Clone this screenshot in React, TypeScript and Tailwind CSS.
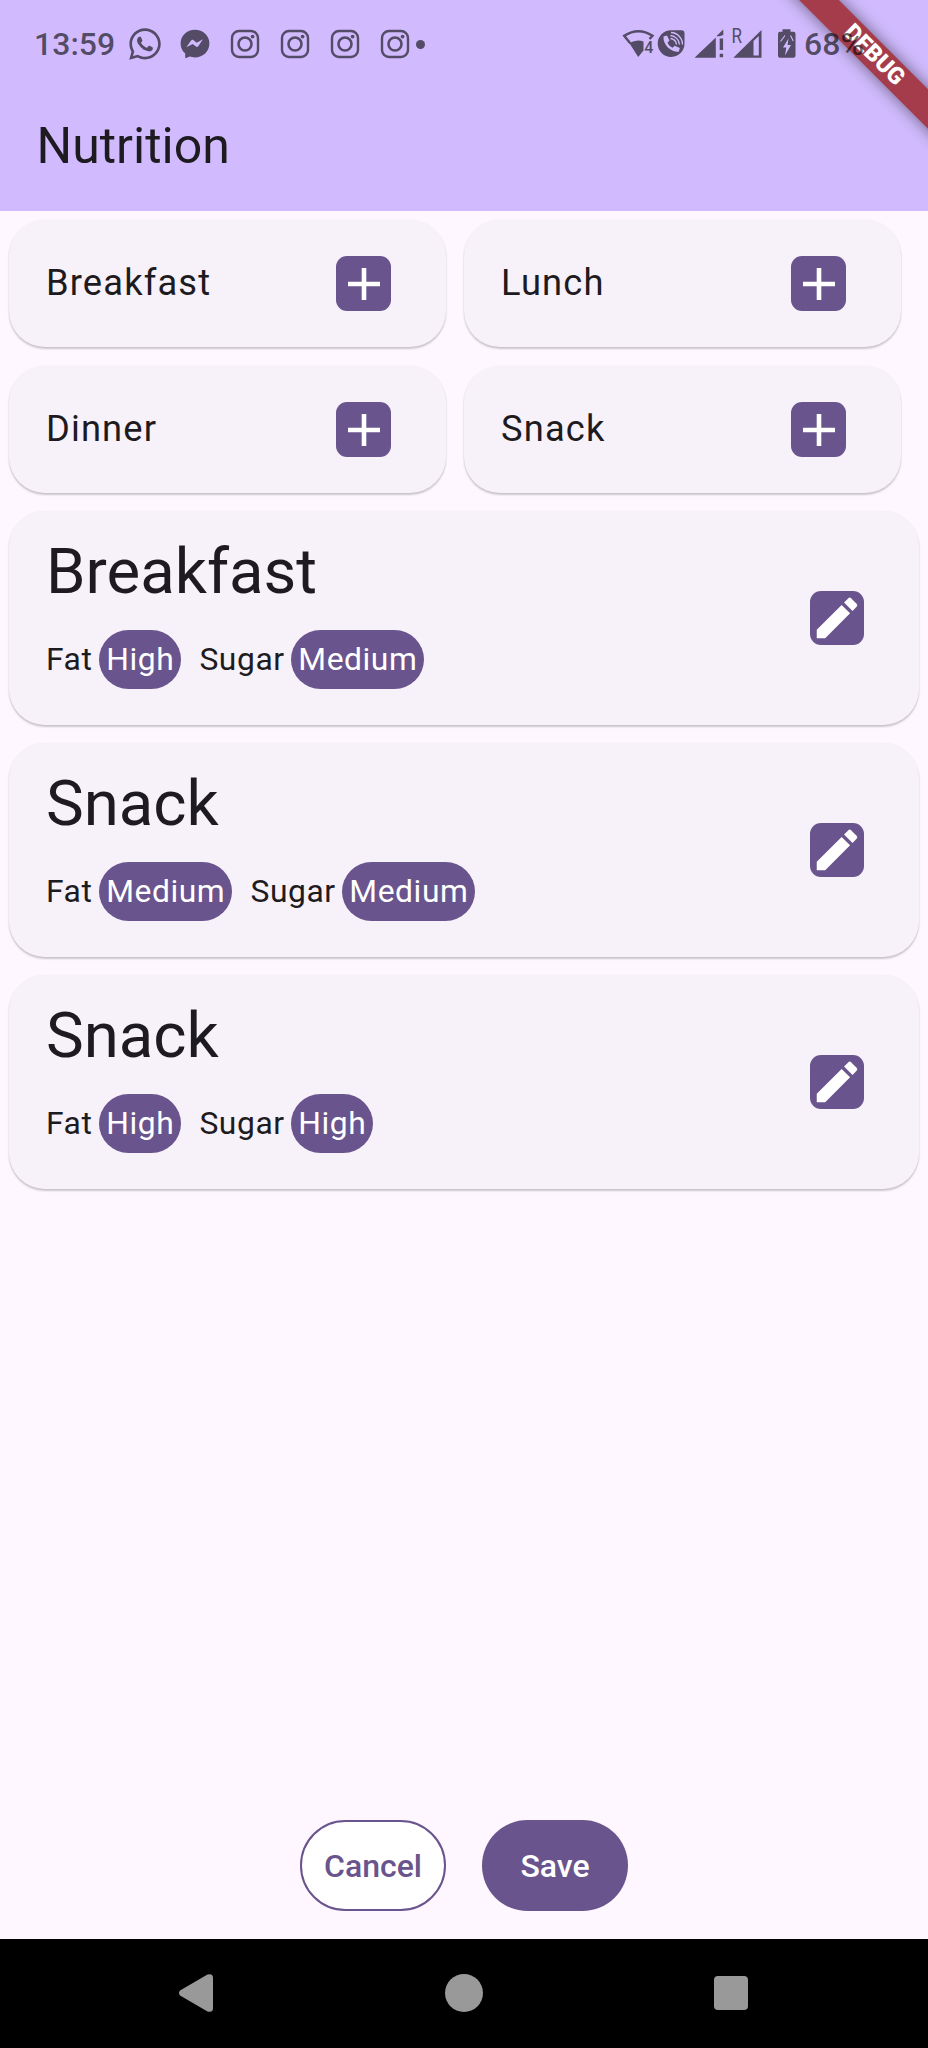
import React from "react";
import { FaWhatsapp } from "react-icons/fa";
import { MdEdit } from "react-icons/md";

const ink = "#544b66";

function Instagram() {
  return (
    <svg className="h-[30px] w-[30px] shrink-0" viewBox="0 0 30 30" fill="none" stroke={ink}>
      <rect x="2" y="2" width="26" height="26" rx="7" strokeWidth="2.4" />
      <circle cx="15" cy="15" r="6.5" strokeWidth="2.6" />
      <circle cx="22.6" cy="7.6" r="1.9" fill={ink} stroke="none" />
    </svg>
  );
}

function Messenger() {
  return (
    <svg className="h-[30px] w-[30px] shrink-0" viewBox="0 0 30 30">
      <path
        d="M15 .8C6.900.8.600 6.700.600 14.400c0 4 1.700 7.500 4.500 9.900l.2 4.200c0 .5.500.8 1 .6l3.300-1.500c1.700.5 3.500.8 5.400.8 8.100 0 14.400-6 14.400-13.900S23.100.8 15 .8z"
        fill={ink}
      />
      <path d="M6.300 18.300l4.800-6.800c.5-.8 1.500-.9 2.200-.4l3.400 2.600 6.300-3.500-4.800 7c-.5.7-1.500.9-2.200.4l-3.300-2.600z" fill="#d1bbfe" />
    </svg>
  );
}

function SystemIcons() {
  return (
    <svg className="h-[36px] w-[182px] shrink-0" viewBox="0 0 182 36" fill={ink}>
      <path d="M8.200 17.300L2.200 9.800Q16.500 0.800 30.500 9.800L27.500 13" fill="none" stroke={ink} strokeWidth="2.400" />
      <path d="M7.300 17Q15 12.800 21.500 15.500V24.500L16.200 31z" />
      <text x="22.300" y="27" fontFamily="Roboto" fontSize="16" fontWeight="500">4</text>
      <path d="M49 4.200h10.500a3 3 0 0 1 3 3v10a13.400 13.400 0 1 1-13.500-13z" />
      <path d="M41.500 10.500l3.500-1 2.500 5-2 2.300c1 2.300 2.800 4 5 5l2.300-2 5 2.300-1 3.700c-8 .6-16-7-15.300-15.300z" fill="#d1bbfe" />
      <path d="M48.500 12.500a7 7 0 0 1 6 6M48.500 9.500a10 10 0 0 1 9 9M49 6.500a12 12 0 0 1 11.500 12" fill="none" stroke="#d1bbfe" strokeWidth="1.300" />
      <path d="M72.500 31.700L93.800 11.500V31.700zM94.300 10.200L101.300 3.500V9L97.500 10.200z" />
      <path d="M97.700 12.500h3.400v11.500h-3.400zM97.700 27.700h3.400v3.600h-3.400z" />
      <text x="109.500" y="17.200" fontFamily="Roboto" fontSize="19.500" textLength="10.500" lengthAdjust="spacingAndGlyphs">R</text>
      <path fillRule="evenodd" d="M111.300 31.700L139.500 4v27.700zM131.500 15v14.500h5.300V10z" />
      <path d="M160.500 3.200h8v2.500h3a2 2 0 0 1 2 2v22a2 2 0 0 1-2 2h-13.500a2 2 0 0 1-2-2v-22a2 2 0 0 1 2-2h2.500z" />
      <path d="M166.500 12.500l-5.500 9h3.300l-1.300 8 6-10.500h-3.500z" fill="#d1bbfe" />
      <path d="M158.500 15.500L163 9.500M168.500 9.500L171.300 15" fill="none" stroke="#d1bbfe" strokeWidth="1.100" />
    </svg>
  );
}

function StatusBar() {
  return (
    <div className="relative z-10 flex h-[88px] items-center pl-[34px] text-black/60">
      <span className="w-[82px] shrink-0 text-[32px] font-medium leading-[36px]">13:59</span>
      <FaWhatsapp className="ml-[11px] h-[36px] w-[36px] shrink-0" />
      <div className="ml-[17px] flex items-center gap-5">
        <Messenger />
        <Instagram />
        <Instagram />
        <Instagram />
        <Instagram />
      </div>
      <span className="ml-[6px] h-[9px] w-[9px] shrink-0 rounded-full bg-[#544b66]" />
      <div className="ml-[197px] flex items-center">
        <SystemIcons />
        <span className="text-[32px] font-medium leading-[36px]">68%</span>
      </div>
    </div>
  );
}

function DebugBanner() {
  return (
    <div className="pointer-events-none absolute right-0 top-0 h-[170px] w-[180px] overflow-hidden">
      <div className="absolute left-[-25px] top-[40px] flex h-[28px] w-[300px] rotate-45 items-center justify-center bg-[#a53c4b] pl-[3px] text-[23.5px] font-black text-white shadow-[0_0_16px_rgba(0,0,0,0.5)]">
        DEBUG
      </div>
    </div>
  );
}

const surface = "rounded-[36px] bg-[#f7f1f9] shadow-[0_2px_2px_rgba(0,0,0,0.2),0_0_2px_rgba(0,0,0,0.05)]";

function AddCard({ name }: { name: string }) {
  return (
    <div className={`flex h-[127px] w-[437px] items-center justify-between pl-[37px] pr-[55px] ${surface}`}>
      <span className="pb-[2px] text-[36.3px] leading-[52px] tracking-[1.14px]">{name}</span>
      <button className="flex h-[55px] w-[55px] items-center justify-center rounded-[11px] bg-[#69548d]">
        <svg className="h-[32px] w-[32px]" viewBox="0 0 32 32" fill="#fff">
          <path d="M13.700 0h4.600v13.700H32v4.600H18.300V32h-4.600V18.300H0v-4.600h13.700z" />
        </svg>
      </button>
    </div>
  );
}

function Level({ label, value }: { label: string; value: string }) {
  return (
    <div className="flex items-center">
      <span>{label}</span>
      <span className="ml-[6.700px] flex h-[59px] items-center rounded-[30px] bg-[#69548d] px-[7px] text-white">{value}</span>
    </div>
  );
}

function MealCard({ name, fat, sugar }: { name: string; fat: string; sugar: string }) {
  return (
    <div className={`flex h-[214px] items-center justify-between pl-[37px] pr-[55px] ${surface}`}>
      <div className="flex h-full flex-col pt-[24px]">
        <h2 className="text-[63.5px] leading-[74px]">{name}</h2>
        <div className="mt-[21px] flex gap-[18.200px] text-[31.8px] leading-[45px] tracking-[0.57px]">
          <Level label="Fat" value={fat} />
          <Level label="Sugar" value={sugar} />
        </div>
      </div>
      <button className="flex h-[54px] w-[54px] items-center justify-center rounded-[11px] bg-[#69548d] text-white">
        <MdEdit className="h-[54px] w-[54px]" />
      </button>
    </div>
  );
}

const adds = ["Breakfast", "Lunch", "Dinner", "Snack"];
const meals = [
  { name: "Breakfast", fat: "High", sugar: "Medium" },
  { name: "Snack", fat: "Medium", sugar: "Medium" },
  { name: "Snack", fat: "High", sugar: "High" },
];

export default function App() {
  return (
    <div className="relative flex h-[2048px] w-[928px] flex-col overflow-hidden bg-[#fef7ff] font-[Roboto,sans-serif] text-[#1d1b20]">
      <DebugBanner />
      <header className="h-[211px] shrink-0 bg-[#d1bbfe]">
        <StatusBar />
        <h1 className="pl-[36.500px] pt-[29px] text-[50px] leading-[58px]">Nutrition</h1>
      </header>
      <main className="flex flex-1 flex-col px-[9px] pt-[9px]">
        <div className="grid grid-cols-[437px_437px] gap-x-[18px] gap-y-[19px]">
          {adds.map((name) => (
            <AddCard key={name} name={name} />
          ))}
        </div>
        <div className="mt-[18px] flex flex-col gap-[18px]">
          {meals.map((meal, i) => (
            <MealCard key={i} {...meal} />
          ))}
        </div>
      </main>
      <div className="flex justify-center gap-[36px] pb-[28px] text-[32px] font-medium">
        <button className="h-[91px] w-[146px] rounded-[46px] border-2 border-[#69548d] bg-white text-[#69548d]">Cancel</button>
        <button className="h-[91px] w-[146px] rounded-[46px] bg-[#69548d] text-white">Save</button>
      </div>
      <nav className="flex h-[109px] shrink-0 items-center justify-between bg-black pb-[1px] pl-[178px] pr-[180px]">
        <svg className="h-[40px] w-[36px]" viewBox="0 0 36 40" fill="#999">
          <path d="M2 17.500L29.500 1.500Q35 0 35 5V35Q35 40 29.500 38.500L2 22.500Q0 20 2 17.500z" />
        </svg>
        <span className="h-[38px] w-[38px] rounded-full bg-[#999]" />
        <span className="h-[34px] w-[34px] rounded-[4px] bg-[#999]" />
      </nav>
    </div>
  );
}
